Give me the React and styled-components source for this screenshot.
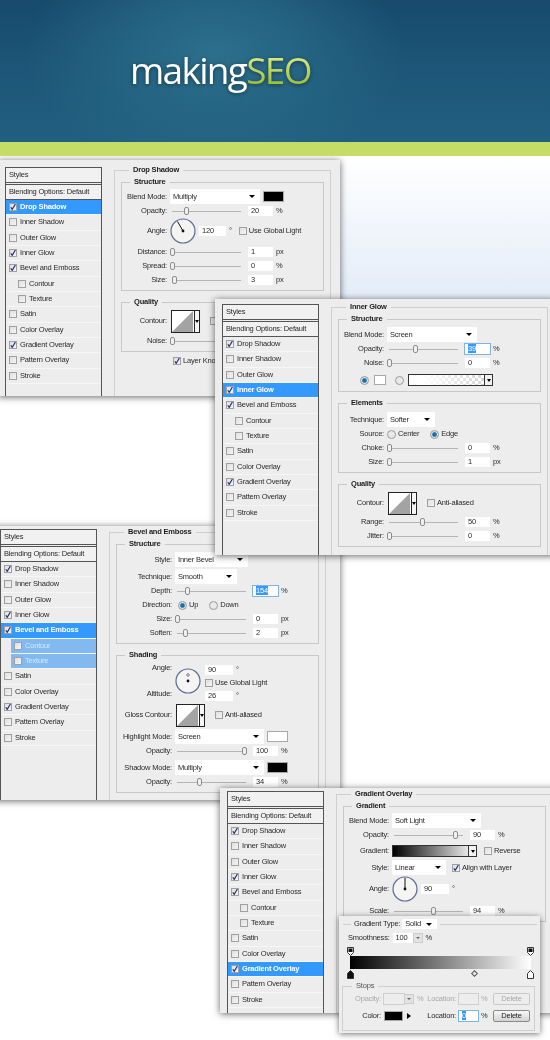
import React from "react";
import styled, { createGlobalStyle } from "styled-components";

const ITEMS = [
  { name: "Drop Shadow" },
  { name: "Inner Shadow" },
  { name: "Outer Glow" },
  { name: "Inner Glow" },
  { name: "Bevel and Emboss" },
  { name: "Contour", nested: true },
  { name: "Texture", nested: true },
  { name: "Satin" },
  { name: "Color Overlay" },
  { name: "Gradient Overlay" },
  { name: "Pattern Overlay" },
  { name: "Stroke" },
];
const CHECKED = ["Drop Shadow", "Inner Glow", "Bevel and Emboss", "Gradient Overlay"];

function Tick({ on }) {
  return (
    <CheckBox>
      {on && (
        <svg width="8" height="8" viewBox="0 0 8 8">
          <path d="M1.8 4.2 L3.2 6.4 L6.4 1" fill="none" stroke="#24327a" strokeWidth="1.2" />
        </svg>
      )}
    </CheckBox>
  );
}

function Sidebar({ active }) {
  const bevel = active === "Bevel and Emboss";
  return (
    <Side>
      <SideBox>Styles</SideBox>
      <SideBox $second>Blending Options: Default</SideBox>
      {ITEMS.map((item) => (
        <SideRow
          key={item.name}
          $active={item.name === active}
          $nested={item.nested}
          $sub={bevel && item.nested}
        >
          <Tick on={CHECKED.includes(item.name)} />
          {item.name}
        </SideRow>
      ))}
    </Side>
  );
}

function SliderRow({ label, pos, value, unit, selected, t }) {
  return (
    <Row $t={t}>
      <Label>{label}</Label>
      <Track>
        <Thumb $pos={pos} />
      </Track>
      <Field $w={25} $ml={7} $sel={selected}>
        {selected ? <Selected>{value}</Selected> : value}
      </Field>
      <Unit>{unit}</Unit>
    </Row>
  );
}

function SelectRow({ label, value, w, swatch, t, children }) {
  return (
    <Row $h={15} $t={t}>
      <Label>{label}</Label>
      <Select $w={w}>{value}</Select>
      {swatch && <Swatch $color={swatch} />}
      {children}
    </Row>
  );
}

function Dial({ deg, cross }) {
  const rad = (deg * Math.PI) / 180;
  return (
    <DialSvg $mt={cross ? 5 : 0} width="26" height="26" viewBox="0 0 26 26">
      <circle cx="13" cy="13" r="12" fill="#f4f4f2" stroke="#5b6c92" strokeWidth="1.2" />
      {cross ? (
        <path d="M13 5 V9 M11 7 H15" stroke="#333" strokeWidth="0.8" strokeDasharray="1 .6" />
      ) : (
        <line
          x1="13"
          y1="13"
          x2={13 + 11 * Math.cos(rad)}
          y2={13 - 11 * Math.sin(rad)}
          stroke="#111"
        />
      )}
      <circle cx="13" cy="13" r="1.4" fill="#111" />
    </DialSvg>
  );
}

function ContourRow({ label, t }) {
  return (
    <Row $h={24} $t={t}>
      <Label>{label}</Label>
      <ContourBox>
        <svg width="22" height="21" viewBox="0 0 22 21">
          <rect width="22" height="21" fill="#fff" />
          <path d="M0 21 L21 0 V21 Z" fill="#a3a3a3" />
        </svg>
        <ContourArrow />
      </ContourBox>
      <Tick />
      <CheckText>Anti-aliased</CheckText>
    </Row>
  );
}

function StopMark({ x, y, dark, flip }) {
  return (
    <StopSvg $x={x} $y={y} width="7" height="9" viewBox="0 0 7 9">
      {flip ? (
        <path d="M.5 3.5 L3.5 .5 L6.5 3.5 V8.5 H.5 Z" fill={dark ? "#111" : "#fff"} stroke="#333" />
      ) : (
        <>
          <path d="M.5 .5 H6.5 V5.5 L3.5 8.5 L.5 5.5 Z" fill="#fff" stroke="#333" />
          <rect x="1.5" y="1.5" width="4" height="3.5" fill="#111" />
        </>
      )}
    </StopSvg>
  );
}

function DropShadowWindow() {
  return (
    <Window $x={-2} $y={4} $w={342} $h={236} $pt={5} $z={1}>
      <Sidebar active="Drop Shadow" />
      <Outer>
        <legend>Drop Shadow</legend>
        <Group $label={45}>
          <legend>Structure</legend>
          <SelectRow label="Blend Mode:" value="Multiply" w={90} swatch="#000" />
          <SliderRow label="Opacity:" pos={15} value="20" unit="%" t={0} />
          <Row $h={24} $t={1}>
            <Label>Angle:</Label>
            <Dial deg={120} />
            <Field $w={27} $ml={3}>120</Field>
            <Unit>°</Unit>
            <CheckGap $ml={7} />
            <Tick />
            <CheckText>Use Global Light</CheckText>
          </Row>
          <SliderRow label="Distance:" pos={1} value="1" unit="px" t={2} />
          <SliderRow label="Spread:" pos={1} value="0" unit="%" />
          <SliderRow label="Size:" pos={3} value="3" unit="px" />
        </Group>
        <Group $label={45} $gap={6}>
          <legend>Quality</legend>
          <ContourRow label="Contour:" />
          <SliderRow label="Noise:" pos={1} value="0" unit="%" t={1} />
        </Group>
        <Row $t={2}>
          <CheckGap $ml={52} />
          <Tick on />
          <CheckText>Layer Knocks Out Drop Shadow</CheckText>
        </Row>
      </Outer>
    </Window>
  );
}

function InnerGlowWindow() {
  return (
    <Window $x={215} $y={143} $w={340} $h={256} $pt={3} $z={3}>
      <Sidebar active="Inner Glow" />
      <Outer>
        <legend>Inner Glow</legend>
        <Group $label={45}>
          <legend>Structure</legend>
          <SelectRow label="Blend Mode:" value="Screen" w={90} t={1} />
          <SliderRow label="Opacity:" pos={27} value="39" unit="%" selected />
          <SliderRow label="Noise:" pos={1} value="0" unit="%" />
          <Row $h={16} $t={2}>
            <CheckGap $ml={21} />
            <Radio $on />
            <Swatch $color="#fff" $w={12} $tall $ml={5} />
            <CheckGap $ml={9} />
            <Radio />
            <GradientBox $w={85} $ml={4} $fade>
              <GradientArrow />
            </GradientBox>
          </Row>
        </Group>
        <Group $label={45} $gap={6}>
          <legend>Elements</legend>
          <SelectRow label="Technique:" value="Softer" w={48} t={2} />
          <Row>
            <Label>Source:</Label>
            <Radio />
            <RadioText>Center</RadioText>
            <CheckGap $ml={11} />
            <Radio $on />
            <RadioText>Edge</RadioText>
          </Row>
          <SliderRow label="Choke:" pos={1} value="0" unit="%" />
          <SliderRow label="Size:" pos={1} value="1" unit="px" />
        </Group>
        <Group $label={45} $gap={6}>
          <legend>Quality</legend>
          <ContourRow label="Contour:" />
          <SliderRow label="Range:" pos={34} value="50" unit="%" />
          <SliderRow label="Jitter:" pos={1} value="0" unit="%" />
        </Group>
      </Outer>
    </Window>
  );
}

function BevelWindow() {
  return (
    <Window $x={-7} $y={370} $w={347} $h={274} $pt={1} $z={2}>
      <Sidebar active="Bevel and Emboss" />
      <Outer>
        <legend>Bevel and Emboss</legend>
        <Group $label={55}>
          <legend>Structure</legend>
          <SelectRow label="Style:" value="Inner Bevel" w={73} t={1} />
          <SelectRow label="Technique:" value="Smooth" w={62} t={2} />
          <SliderRow label="Depth:" pos={11} value="154" unit="%" selected />
          <Row>
            <Label>Direction:</Label>
            <CheckGap $ml={3} />
            <Radio $on />
            <RadioText>Up</RadioText>
            <CheckGap $ml={11} />
            <Radio />
            <RadioText>Down</RadioText>
          </Row>
          <SliderRow label="Size:" pos={1} value="0" unit="px" />
          <SliderRow label="Soften:" pos={9} value="2" unit="px" />
        </Group>
        <Group $label={55} $gap={6}>
          <legend>Shading</legend>
          <ShadeBlock>
            <ShadeLabels>
              <Label>Angle:</Label>
              <Label>Altitude:</Label>
            </ShadeLabels>
            <Dial deg={90} cross />
            <ShadeFields>
              <Row $h={13}>
                <Field $w={28} $ml={0}>90</Field>
                <Unit>°</Unit>
              </Row>
              <Row $h={13}>
                <Tick />
                <CheckText>Use Global Light</CheckText>
              </Row>
              <Row $h={13}>
                <Field $w={28} $ml={0}>26</Field>
                <Unit>°</Unit>
              </Row>
            </ShadeFields>
          </ShadeBlock>
          <ContourRow label="Gloss Contour:" t={1} />
          <SelectRow label="Highlight Mode:" value="Screen" w={89} swatch="#fff" t={2} />
          <SliderRow label="Opacity:" pos={68} value="100" unit="%" />
          <SelectRow label="Shadow Mode:" value="Multiply" w={89} swatch="#000" t={2} />
          <SliderRow label="Opacity:" pos={23} value="34" unit="%" />
        </Group>
      </Outer>
    </Window>
  );
}

function GradientWindow() {
  return (
    <Window $x={220} $y={632} $w={340} $h={225} $pt={1} $z={4}>
      <Sidebar active="Gradient Overlay" />
      <Outer>
        <legend>Gradient Overlay</legend>
        <Group $label={45}>
          <legend>Gradient</legend>
          <SelectRow label="Blend Mode:" value="Soft Light" w={89} />
          <SliderRow label="Opacity:" pos={62} value="90" unit="%" />
          <Row $t={2}>
            <Label>Gradient:</Label>
            <GradientBox $w={85}>
              <GradientArrow />
            </GradientBox>
            <CheckGap $ml={7} />
            <Tick />
            <CheckText>Reverse</CheckText>
          </Row>
          <SelectRow label="Style:" value="Linear" w={54} t={2}>
            <CheckGap $ml={6} />
            <Tick on />
            <CheckText>Align with Layer</CheckText>
          </SelectRow>
          <Row $h={26} $t={1}>
            <Label>Angle:</Label>
            <Dial deg={90} />
            <Field $w={28} $ml={3}>90</Field>
            <Unit>°</Unit>
          </Row>
          <SliderRow label="Scale:" pos={40} value="94" unit="%" t={2} />
        </Group>
      </Outer>
    </Window>
  );
}

function GradientEditor() {
  return (
    <Popup>
      <TypeSet>
        <legend>
          Gradient Type:
          <Select $w={35} $h={10}>Solid</Select>
        </legend>
      </TypeSet>
      <Row $t={2} $pl={9}>
        Smoothness:
        <Field $w={20} $ml={3}>100</Field>
        <Spin />
        <Unit>%</Unit>
      </Row>
      <StopArea>
        <StopMark x={-3} y={0} />
        <StopMark x={177} y={0} />
        <Bar />
        <StopMark x={-3} y={23} dark flip />
        <StopMark x={177} y={23} flip />
        <MidPoint />
      </StopArea>
      <StopsGroup>
        <legend>Stops</legend>
        <Row $t={1} $muted>
          <StopCell>
            <StopLabel $w={38}>Opacity:</StopLabel>
            <Field $w={20} $ml={3} $off />
            <Spin />
            <Unit>%</Unit>
          </StopCell>
          <StopLabel $w={33}>Location:</StopLabel>
          <Field $w={19} $ml={3} $off />
          <Unit>%</Unit>
          <DeleteButton $off>Delete</DeleteButton>
        </Row>
        <Row $t={3}>
          <StopCell>
            <StopLabel $w={38}>Color:</StopLabel>
            <Swatch $color="#000" $w={19} $tall $ml={3} />
            <ColorArrow />
          </StopCell>
          <StopLabel $w={33}>Location:</StopLabel>
          <Field $w={19} $ml={3} $sel>
            <Selected>0</Selected>
          </Field>
          <Unit>%</Unit>
          <DeleteButton>Delete</DeleteButton>
        </Row>
      </StopsGroup>
    </Popup>
  );
}

export default function App() {
  return (
    <>
      <GlobalStyle />
      <Page>
        <Header>
          <Logo>
            <LogoMaking>making</LogoMaking>
            <LogoSeo>SEO</LogoSeo>
          </Logo>
        </Header>
        <Band />
        <Desktop>
          <DropShadowWindow />
          <BevelWindow />
          <InnerGlowWindow />
          <GradientWindow />
          <GradientEditor />
        </Desktop>
      </Page>
    </>
  );
}

const GlobalStyle = createGlobalStyle`
  body {
    margin: 0;
    background: #fff;
    font-family: "Liberation Sans", Arial, sans-serif;
  }
`;

const Page = styled.div`
  width: 550px;
  height: 1040px;
  overflow: hidden;
  display: flex;
  flex-direction: column;
`;

const Header = styled.header`
  position: relative;
  z-index: 6;
  height: 142px;
  padding: 45px 0 0 130px;
  box-sizing: border-box;
  background:
    radial-gradient(ellipse 190px 125px at 215px 55px, #2c6f8c 0%, rgba(40, 105, 135, 0.75) 45%, rgba(30, 90, 125, 0) 100%),
    linear-gradient(180deg, #174a6c 0%, #1c5577 45%, #215f80 100%);
`;

const Logo = styled.div`
  font-family: "Open Sans", sans-serif;
  font-size: 37px;
  font-weight: 500;
  line-height: 50px;
  letter-spacing: -1.7px;
  display: flex;
  filter: drop-shadow(0 1px 2px rgba(0, 0, 0, 0.45));
`;

const LogoMaking = styled.span`
  color: #fff;
`;

const LogoSeo = styled.span`
  background: linear-gradient(180deg, #d8e97c 25%, #9dbd35 80%);
  -webkit-background-clip: text;
  background-clip: text;
  color: transparent;
`;

const Band = styled.div`
  position: relative;
  z-index: 6;
  height: 14px;
  background: #c5dc66;
`;

const Desktop = styled.main`
  position: relative;
  flex: 1;
  background: linear-gradient(180deg, #fff 0%, #e3ecf8 100%) no-repeat 0 0 / 100% 143px;
`;

const Window = styled.section`
  position: absolute;
  left: ${(p) => p.$x}px;
  top: ${(p) => p.$y}px;
  width: ${(p) => p.$w}px;
  height: ${(p) => p.$h}px;
  z-index: ${(p) => p.$z};
  box-sizing: border-box;
  padding: ${(p) => p.$pt}px 0 0 7px;
  display: flex;
  overflow: hidden;
  background: #ededed;
  box-shadow: 0 1px 7px rgba(0, 0, 0, 0.6);
  color: #2a2a2a;
  font-size: 7.5px;
  letter-spacing: -0.2px;
  line-height: 10px;
  filter: blur(0.3px);
`;

const Side = styled.aside`
  width: 97px;
  flex-shrink: 0;
  margin-top: 2px;
  box-sizing: border-box;
  border-left: 1px solid #555;
  border-right: 1px solid #555;
`;

const SideBox = styled.div`
  height: 16px;
  margin: ${(p) => (p.$second ? "1px -1px 0" : "0 -1px")};
  box-sizing: border-box;
  padding: 2px 3px;
  border: 1px solid #555;
  background: #f1f1f1;
  white-space: nowrap;
`;

const SideRow = styled.div`
  height: 15.33px;
  box-sizing: border-box;
  display: flex;
  align-items: center;
  gap: 3px;
  margin-left: ${(p) => (p.$sub ? 10 : 0)}px;
  padding-left: ${(p) => (p.$nested ? (p.$sub ? 3 : 12) : 3)}px;
  border-bottom: 1px solid #f6f6f6;
  white-space: nowrap;
  font-weight: ${(p) => (p.$active ? 700 : 400)};
  color: ${(p) => (p.$active ? "#fff" : p.$sub ? "#d8e8fb" : "inherit")};
  background: ${(p) => (p.$active ? "#3399ff" : p.$sub ? "#82b9f1" : "transparent")};
`;

const CheckBox = styled.span`
  width: 8px;
  height: 8px;
  flex-shrink: 0;
  box-sizing: border-box;
  display: inline-flex;
  align-items: center;
  justify-content: center;
  outline: 1px solid #a0a0a0;
  outline-offset: -1px;
  background: linear-gradient(135deg, #dcdcdc, #f8f8f8);
`;

const Outer = styled.fieldset`
  width: 217px;
  min-width: 0;
  min-height: 320px;
  flex-shrink: 0;
  align-self: flex-start;
  box-sizing: border-box;
  margin: 0 0 0 12px;
  padding: 2px 6px 0;
  border: 1px solid #cfcfcf;

  legend {
    margin-left: 8px;
    padding: 0 4px;
    font-weight: 700;
    color: #1c1c1c;
    white-space: nowrap;
  }
`;

const Group = styled.fieldset`
  --label-w: ${(p) => p.$label}px;
  min-width: 0;
  margin: ${(p) => p.$gap || 0}px 0 0;
  padding: 2px 0 3px;
  border: 1px solid #c8c8c8;
`;

const Row = styled.div`
  height: ${(p) => p.$h || 14}px;
  margin-top: ${(p) => p.$t || 0}px;
  padding-left: ${(p) => p.$pl || 0}px;
  display: flex;
  align-items: center;
  white-space: nowrap;
  color: ${(p) => (p.$muted ? "#a8a8a8" : "inherit")};
`;

const Label = styled.span`
  width: var(--label-w);
  margin-right: 3px;
  flex-shrink: 0;
  text-align: right;
  white-space: nowrap;
`;

const Track = styled.div`
  position: relative;
  width: 69px;
  height: 1px;
  margin-left: 2px;
  flex-shrink: 0;
  background: #b4b4b4;
`;

const Thumb = styled.span`
  position: absolute;
  left: ${(p) => p.$pos}px;
  top: -4px;
  width: 5px;
  height: 8px;
  margin-left: -3px;
  box-sizing: border-box;
  border: 1px solid #8d8d8d;
  border-radius: 2px;
  background: #f0f0f0;
`;

const Field = styled.span`
  width: ${(p) => p.$w}px;
  height: 10px;
  margin-left: ${(p) => p.$ml}px;
  flex-shrink: 0;
  box-sizing: border-box;
  padding-left: 3px;
  line-height: 10px;
  background: ${(p) => (p.$off ? "#ededed" : "#fff")};
  outline: ${(p) => (p.$sel ? "1px solid #7fb2e5" : p.$off ? "1px solid #cfcfcf" : "none")};
`;

const Selected = styled.span`
  background: #3399ff;
  color: #fff;
`;

const Unit = styled.span`
  margin-left: 3px;
`;

const Select = styled.span`
  width: ${(p) => p.$w}px;
  height: ${(p) => p.$h || 15}px;
  flex-shrink: 0;
  box-sizing: border-box;
  padding: 0 5px 0 3px;
  display: inline-flex;
  align-items: center;
  justify-content: space-between;
  background: #fff;
  font-weight: 400;

  &::after {
    content: "";
    border-left: 3px solid transparent;
    border-right: 3px solid transparent;
    border-top: 3px solid #000;
  }
`;

const Swatch = styled.span`
  width: ${(p) => p.$w || 21}px;
  height: ${(p) => (p.$tall ? 10 : 11)}px;
  margin-left: ${(p) => p.$ml || 3}px;
  flex-shrink: 0;
  box-sizing: border-box;
  border: 1px solid #a8a8a8;
  background: ${(p) => p.$color};
`;

const DialSvg = styled.svg`
  flex-shrink: 0;
  margin-top: ${(p) => p.$mt}px;
`;

const CheckGap = styled.span`
  width: ${(p) => p.$ml}px;
  flex-shrink: 0;
`;

const CheckText = styled.span`
  margin-left: 2px;
`;

const ContourBox = styled.span`
  width: 29px;
  height: 23px;
  margin: 0 10px 0 1px;
  flex-shrink: 0;
  box-sizing: border-box;
  display: flex;
  border: 1px solid #222;
`;

const ContourArrow = styled.span`
  flex: 1;
  display: flex;
  align-items: center;
  justify-content: center;
  border-left: 1px solid #222;
  background: #f6f6f6;

  &::after {
    content: "";
    border-left: 2px solid transparent;
    border-right: 2px solid transparent;
    border-top: 3px solid #000;
  }
`;

const Radio = styled.span`
  width: 9px;
  height: 9px;
  flex-shrink: 0;
  box-sizing: border-box;
  border: 1px solid #9a9a9a;
  border-radius: 50%;
  background: ${(p) =>
    p.$on ? "radial-gradient(circle, #1a6fa8 0 35%, #d6e6f2 60%)" : "#e9e9e9"};
`;

const RadioText = styled.span`
  margin-left: 2px;
`;

const GradientBox = styled.span`
  width: ${(p) => p.$w}px;
  height: 12px;
  margin-left: ${(p) => p.$ml || 0}px;
  flex-shrink: 0;
  box-sizing: border-box;
  display: flex;
  justify-content: flex-end;
  border: 1px solid #333;
  background: ${(p) =>
    p.$fade
      ? "linear-gradient(90deg, #fff 15%, rgba(255,255,255,0)), repeating-conic-gradient(#d0d0d0 0 25%, #fff 0 50%) 0 0 / 6px 6px"
      : "linear-gradient(90deg, #000, #fff)"};
`;

const GradientArrow = styled.span`
  width: 7px;
  display: flex;
  align-items: center;
  justify-content: center;
  border-left: 1px solid #333;
  background: #f2f2f2;

  &::after {
    content: "";
    border-left: 2px solid transparent;
    border-right: 2px solid transparent;
    border-top: 3px solid #000;
  }
`;

const ShadeBlock = styled.div`
  --label-w: 55px;
  height: 39px;
  margin-top: 1px;
  display: flex;
`;

const ShadeLabels = styled.div`
  height: 36px;
  display: flex;
  flex-direction: column;
  justify-content: space-between;
`;

const ShadeFields = styled.div`
  margin-left: 4px;
`;

const Popup = styled.section`
  position: absolute;
  left: 339px;
  top: 760px;
  width: 201px;
  height: 117px;
  z-index: 5;
  box-sizing: border-box;
  padding-top: 3px;
  background: #ededed;
  box-shadow: 0 1px 6px rgba(0, 0, 0, 0.55);
  color: #2a2a2a;
  font-size: 7.5px;
  letter-spacing: -0.2px;
  line-height: 10px;
  filter: blur(0.3px);
`;

const TypeSet = styled.fieldset`
  min-width: 0;
  margin: 0 3px 0 4px;
  padding: 0;
  border: 0;
  border-top: 1px solid #cfcfcf;

  legend {
    margin-left: 8px;
    padding: 0 3px;
    display: flex;
    align-items: center;
    gap: 2px;
    white-space: nowrap;
  }
`;

const Spin = styled.span`
  width: 10px;
  height: 10px;
  flex-shrink: 0;
  box-sizing: border-box;
  display: flex;
  align-items: center;
  justify-content: center;
  border: 1px solid #cdcdcd;
  background: #e2e2e2;

  &::after {
    content: "";
    border-left: 2px solid transparent;
    border-right: 2px solid transparent;
    border-top: 2px solid #666;
  }
`;

const StopArea = styled.div`
  position: relative;
  width: 181px;
  box-sizing: border-box;
  margin: 2px 0 0 11px;
  padding: 9px 0 10px;
`;

const StopSvg = styled.svg`
  position: absolute;
  left: ${(p) => p.$x}px;
  top: ${(p) => p.$y}px;
`;

const Bar = styled.div`
  height: 13px;
  background: linear-gradient(90deg, #000, #fff);
`;

const MidPoint = styled.span`
  position: absolute;
  left: 122px;
  top: 24px;
  width: 3px;
  height: 3px;
  border: 1px solid #555;
  transform: rotate(45deg);
`;

const StopsGroup = styled.fieldset`
  min-width: 0;
  margin: 2px 5px 0 3px;
  padding: 0 0 7px;
  border: 1px solid #cfcfcf;

  legend {
    margin-left: 9px;
    padding: 0 4px;
    color: #555;
  }
`;

const StopCell = styled.span`
  width: 80px;
  flex-shrink: 0;
  display: flex;
  align-items: center;
`;

const StopLabel = styled.span`
  width: ${(p) => p.$w}px;
  flex-shrink: 0;
  text-align: right;
`;

const ColorArrow = styled.span`
  width: 0;
  height: 0;
  margin-left: 4px;
  border-top: 3px solid transparent;
  border-bottom: 3px solid transparent;
  border-left: 4px solid #000;
`;

const DeleteButton = styled.span`
  width: 35px;
  height: 10px;
  margin-left: auto;
  margin-right: 4px;
  flex-shrink: 0;
  text-align: center;
  border: 1px solid ${(p) => (p.$off ? "#c8c8c8" : "#8a8a8a")};
  border-radius: 2px;
  background: ${(p) => (p.$off ? "#ededed" : "linear-gradient(#f8f8f8, #d4d4d4)")};
  color: ${(p) => (p.$off ? "#a8a8a8" : "#222")};
  line-height: 9px;
`;
